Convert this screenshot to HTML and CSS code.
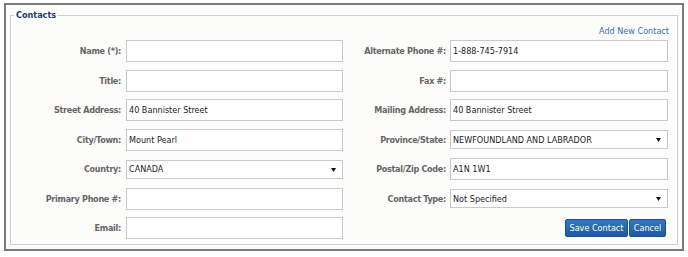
FILE: index.html
```html
<!DOCTYPE html>
<html lang="en">
<head>
<meta charset="utf-8">
<title>Contacts</title>
<link rel="stylesheet" href="styles.css">
</head>
<body>
<div class="frame">
  <fieldset class="contacts">
    <legend class="contacts-title">Contacts</legend>
    <div class="toolbar"><a class="add-link" href="#">Add New Contact</a></div>
    <div class="form-grid">
      <label class="lbl">Name (*):</label>
      <input class="field" type="text" value="">
      <label class="lbl">Alternate Phone #:</label>
      <input class="field" type="text" value="1-888-745-7914">

      <label class="lbl">Title:</label>
      <input class="field" type="text" value="">
      <label class="lbl">Fax #:</label>
      <input class="field" type="text" value="">

      <label class="lbl">Street Address:</label>
      <input class="field" type="text" value="40 Bannister Street">
      <label class="lbl">Mailing Address:</label>
      <input class="field" type="text" value="40 Bannister Street">

      <label class="lbl">City/Town:</label>
      <input class="field" type="text" value="Mount Pearl">
      <label class="lbl">Province/State:</label>
      <div class="select-wrap">
        <select class="pick"><option>NEWFOUNDLAND AND LABRADOR</option></select>
        <svg class="caret" width="5" height="4" viewBox="0 0 5 4"><path d="M0 0H5L2.5 4Z" fill="#111"/></svg>
      </div>

      <label class="lbl">Country:</label>
      <div class="select-wrap">
        <select class="pick"><option>CANADA</option></select>
        <svg class="caret" width="5" height="4" viewBox="0 0 5 4"><path d="M0 0H5L2.5 4Z" fill="#111"/></svg>
      </div>
      <label class="lbl">Postal/Zip Code:</label>
      <input class="field" type="text" value="A1N 1W1">

      <label class="lbl">Primary Phone #:</label>
      <input class="field" type="text" value="">
      <label class="lbl">Contact Type:</label>
      <div class="select-wrap">
        <select class="pick"><option>Not Specified</option></select>
        <svg class="caret" width="5" height="4" viewBox="0 0 5 4"><path d="M0 0H5L2.5 4Z" fill="#111"/></svg>
      </div>

      <label class="lbl">Email:</label>
      <input class="field" type="text" value="">
      <div class="actions">
        <button class="btn btn-save" type="button">Save Contact</button>
        <button class="btn btn-cancel" type="button">Cancel</button>
      </div>
    </div>
  </fieldset>
</div>
</body>
</html>
```

FILE: styles.css
```css
html, body {
  margin: 0;
  padding: 0;
  background: #ffffff;
}

body {
  font-family: "DejaVu Sans Condensed", "DejaVu Sans", sans-serif;
  font-size: 9px;
  color: #333;
}

.frame {
  margin: 3px 4px 0;
  border: 2px solid #7a7a7a;
  background: #fcfcfa;
}

.contacts {
  margin: 4px 4px 4px;
  padding: 4px 9px 5px 0;
  border: 1px solid #cfcfcf;
  min-width: 0;
}

.contacts-title {
  margin-left: 3px;
  padding: 0 2px;
  font-weight: bold;
  font-size: 9px;
  line-height: 12px;
  color: #1f3a6e;
}

.toolbar {
  display: flex;
  justify-content: flex-end;
  height: 12px;
  line-height: 12px;
  margin: 0 -1px 3px 0;
}

.add-link {
  color: #3b6db3;
  text-decoration: none;
  font-size: 9px;
}

.form-grid {
  display: grid;
  grid-template-columns: 115px 217px 107px 218px;
  grid-auto-rows: 22px;
  row-gap: 7.5px;
  align-items: center;
}

.lbl {
  text-align: right;
  font-weight: bold;
  color: #666;
  white-space: nowrap;
  letter-spacing: -0.3px;
}

.form-grid > .lbl:nth-child(4n+1) {
  padding-right: 5px;
}

.form-grid > .lbl:nth-child(4n+3) {
  padding-right: 4px;
}

.field {
  box-sizing: border-box;
  width: 100%;
  height: 22px;
  margin: 0;
  padding: 0 2px;
  border: 1px solid #c9c9c9;
  background: #fff;
  font: inherit;
  color: #222;
  outline: none;
}

.select-wrap {
  position: relative;
  height: 19px;
}

.pick {
  -webkit-appearance: none;
  appearance: none;
  box-sizing: border-box;
  width: 100%;
  height: 19px;
  margin: 0;
  padding: 0 14px 0 2px;
  border: 1px solid #c9c9c9;
  border-radius: 0;
  background: #fff;
  font: inherit;
  color: #222;
}

.caret {
  position: absolute;
  right: 7px;
  top: 8px;
  pointer-events: none;
}

.actions {
  grid-column: 3 / 5;
  display: flex;
  justify-content: flex-end;
  gap: 1px;
  padding-right: 2px;
}

.btn {
  box-sizing: border-box;
  height: 18px;
  margin: 0;
  padding: 0;
  border: 1px solid #1b4f8e;
  border-radius: 2px;
  background: linear-gradient(#3476c2, #1f5aa3);
  color: #fff;
  font: inherit;
  font-size: 9px;
  font-weight: normal;
  line-height: 16px;
  text-align: center;
}

.btn-save {
  width: 63px;
}

.btn-cancel {
  width: 37px;
}
```
